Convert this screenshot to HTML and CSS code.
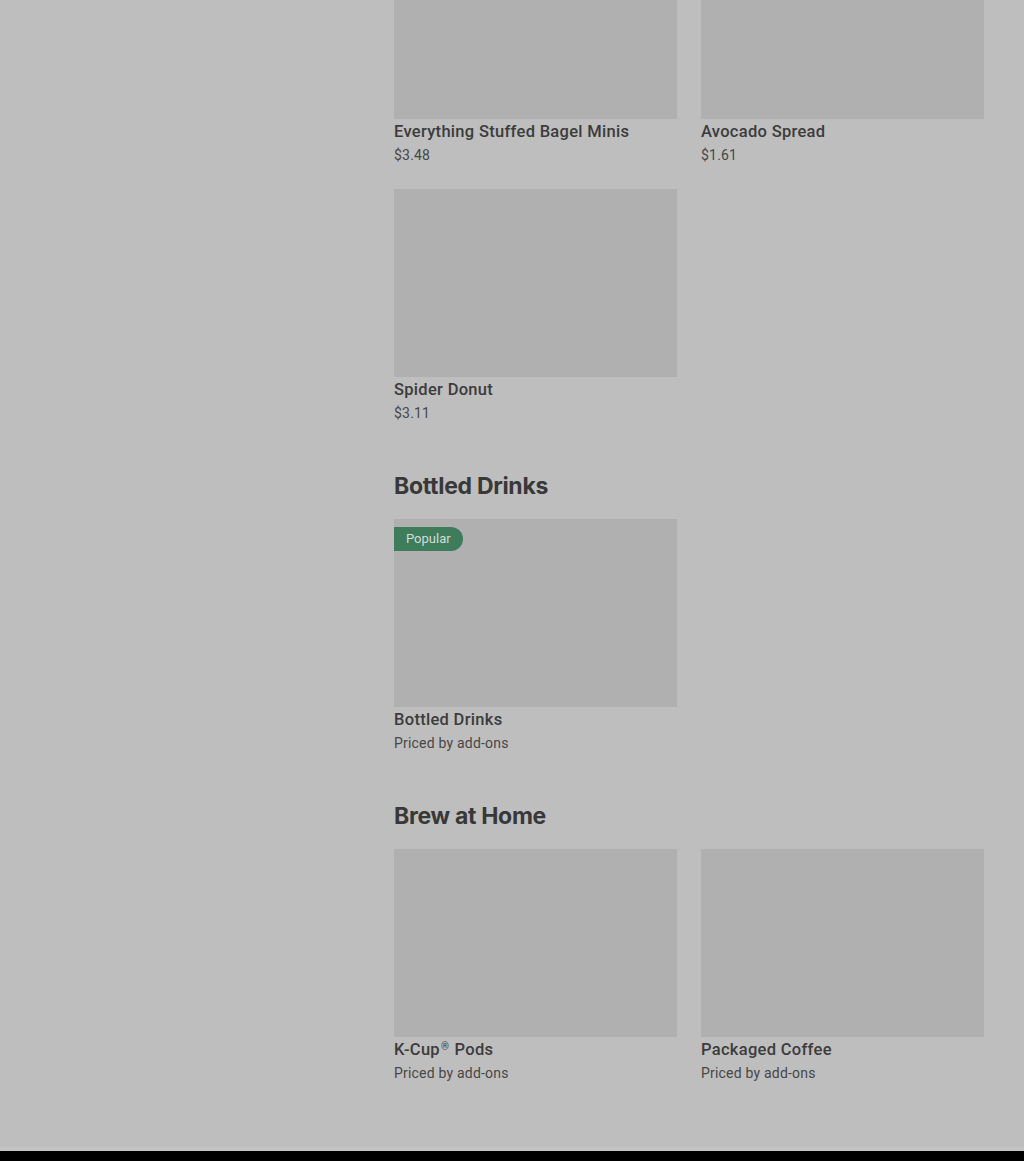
FILE: index.html
```html
<!DOCTYPE html>
<html>
<head>
<meta charset="utf-8">
<link rel="stylesheet" href="styles.css">
</head>
<body>
<div class="page">
  <main class="menu">
    <section class="section first">
      <div class="grid">
        <div class="card">
          <div class="thumb"></div>
          <div class="name">Everything Stuffed Bagel Minis</div>
          <div class="price">$3.48</div>
        </div>
        <div class="card">
          <div class="thumb"></div>
          <div class="name">Avocado Spread</div>
          <div class="price">$1.61</div>
        </div>
        <div class="card">
          <div class="thumb"></div>
          <div class="name">Spider Donut</div>
          <div class="price">$3.11</div>
        </div>
      </div>
    </section>
    <section class="section">
      <h2 class="heading">Bottled Drinks</h2>
      <div class="grid">
        <div class="card">
          <div class="thumb"><span class="badge">Popular</span></div>
          <div class="name">Bottled Drinks</div>
          <div class="price">Priced by add-ons</div>
        </div>
      </div>
    </section>
    <section class="section">
      <h2 class="heading">Brew at Home</h2>
      <div class="grid">
        <div class="card">
          <div class="thumb"></div>
          <div class="name">K-Cup<span class="reg">®</span> Pods</div>
          <div class="price">Priced by add-ons</div>
        </div>
        <div class="card">
          <div class="thumb"></div>
          <div class="name">Packaged Coffee</div>
          <div class="price">Priced by add-ons</div>
        </div>
      </div>
    </section>
  </main>
  <footer class="footer"></footer>
</div>
</body>
</html>
```
FILE: styles.css
```css
html, body {
  margin: 0;
  padding: 0;
  background: #bebebe;
  height: 1161px;
  overflow: hidden;
}
.page {
  display: flex;
  flex-direction: column;
  min-height: 1161px;
}
.menu {
  margin-top: -69px;
  padding: 0 40px 0 394px;
  flex: 1;
}
.section {
  margin-top: 46px;
}
.section.first {
  margin-top: 0;
}
.heading {
  margin: 0 0 17px;
  font-family: Inter, "Liberation Sans", sans-serif;
  font-weight: 700;
  font-size: 23px;
  line-height: 32px;
  letter-spacing: -0.3px;
  color: #383838;
}
.grid {
  display: grid;
  grid-template-columns: 283px 283px;
  column-gap: 24px;
  row-gap: 23px;
}
.card {
  display: flex;
  flex-direction: column;
}
.thumb {
  position: relative;
  height: 188px;
  background: #b0b0b0;
}
.badge {
  position: absolute;
  left: 0;
  top: 8px;
  height: 24px;
  line-height: 24px;
  padding: 0 12px;
  background: #3f7c5c;
  color: #d2dcd6;
  font-family: Roboto, "Liberation Sans", sans-serif;
  font-size: 13px;
  border-radius: 0 12px 12px 0;
}
.name {
  margin-top: 1px;
  font-family: Roboto, "Liberation Sans", sans-serif;
  font-weight: 500;
  font-size: 16.5px;
  line-height: 24px;
  letter-spacing: 0.3px;
  color: #3c3c3c;
}
.reg {
  font-size: 10px;
  vertical-align: 5px;
  line-height: 0;
  margin: 0 1px;
}
.price {
  font-family: Roboto, "Liberation Sans", sans-serif;
  font-size: 14px;
  line-height: 22px;
  letter-spacing: 0.2px;
  color: #474747;
}
.footer {
  margin-top: 63px;
  height: 10px;
  background: #000;
  border-top: 4px solid #c4c4c4;
}
```
